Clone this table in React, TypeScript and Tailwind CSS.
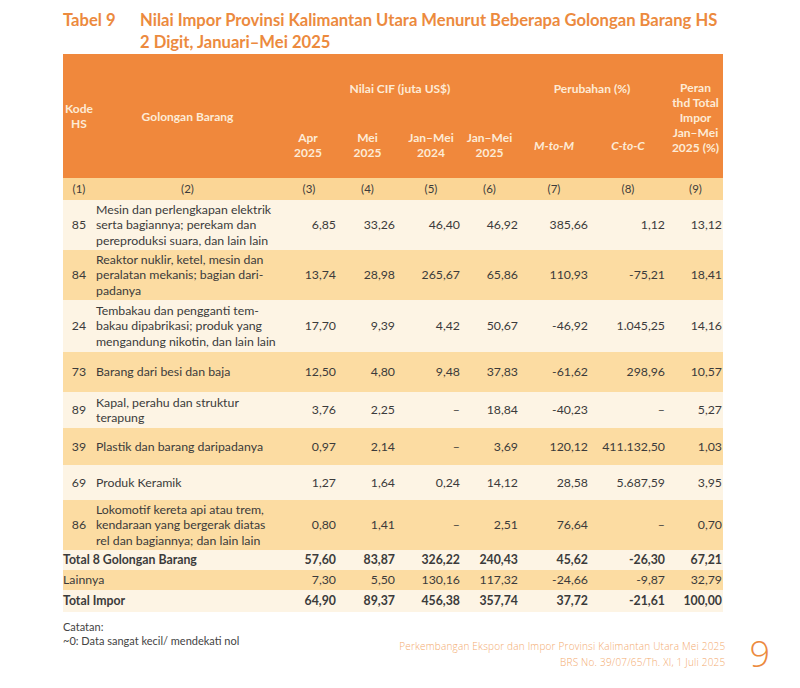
import React from 'react';

const COLS = 'grid grid-cols-[32px_185px_58px_59px_68px_55px_72px_76px_55px]';
const NUM_PAD = ['pr-[2px]', 'pr-[2px]', 'pr-[5px]', 'pr-[2px]', 'pr-[4px]', 'pr-[3px]', 'pr-[1px]'];

type Row = { kode: string; lines: string[]; vals: string[]; h: string; bg: string };

const CREAM = 'bg-[#fdf4e4]';
const YELLOW = 'bg-[#fcdca2]';

const rows: Row[] = [
  {
    kode: '85',
    lines: ['Mesin dan perlengkapan elektrik', 'serta bagiannya; perekam dan', 'pereproduksi suara, dan lain lain'],
    vals: ['6,85', '33,26', '46,40', '46,92', '385,66', '1,12', '13,12'],
    h: 'h-[50px]',
    bg: CREAM,
  },
  {
    kode: '84',
    lines: ['Reaktor nuklir, ketel, mesin dan', 'peralatan mekanis; bagian dari-', 'padanya'],
    vals: ['13,74', '28,98', '265,67', '65,86', '110,93', '-75,21', '18,41'],
    h: 'h-[50px]',
    bg: YELLOW,
  },
  {
    kode: '24',
    lines: ['Tembakau dan pengganti tem-', 'bakau dipabrikasi; produk yang', 'mengandung nikotin, dan lain lain'],
    vals: ['17,70', '9,39', '4,42', '50,67', '-46,92', '1.045,25', '14,16'],
    h: 'h-[52px]',
    bg: CREAM,
  },
  {
    kode: '73',
    lines: ['Barang dari besi dan baja'],
    vals: ['12,50', '4,80', '9,48', '37,83', '-61,62', '298,96', '10,57'],
    h: 'h-[40px]',
    bg: YELLOW,
  },
  {
    kode: '89',
    lines: ['Kapal, perahu dan struktur', 'terapung'],
    vals: ['3,76', '2,25', '–', '18,84', '-40,23', '–', '5,27'],
    h: 'h-[36px]',
    bg: CREAM,
  },
  {
    kode: '39',
    lines: ['Plastik dan barang daripadanya'],
    vals: ['0,97', '2,14', '–', '3,69', '120,12', '411.132,50', '1,03'],
    h: 'h-[37px]',
    bg: YELLOW,
  },
  {
    kode: '69',
    lines: ['Produk Keramik'],
    vals: ['1,27', '1,64', '0,24', '14,12', '28,58', '5.687,59', '3,95'],
    h: 'h-[35px]',
    bg: CREAM,
  },
  {
    kode: '86',
    lines: ['Lokomotif kereta api atau trem,', 'kendaraan yang bergerak diatas', 'rel dan bagiannya; dan lain lain'],
    vals: ['0,80', '1,41', '–', '2,51', '76,64', '–', '0,70'],
    h: 'h-[50px]',
    bg: YELLOW,
  },
];

const totals = [
  { label: 'Total 8 Golongan Barang', vals: ['57,60', '83,87', '326,22', '240,43', '45,62', '-26,30', '67,21'], bold: true, bg: CREAM, h: 'h-[20px]' },
  { label: 'Lainnya', vals: ['7,30', '5,50', '130,16', '117,32', '-24,66', '-9,87', '32,79'], bold: false, bg: YELLOW, h: 'h-[20px]' },
  { label: 'Total Impor', vals: ['64,90', '89,37', '456,38', '357,74', '37,72', '-21,61', '100,00'], bold: true, bg: CREAM, h: 'h-[22px]' },
];

const Header: React.FC = () => (
  <div className={`${COLS} grid-rows-[54px_70px] bg-[#f0883c] text-[12px] font-bold leading-[15px] text-[#fdebd6]`}>
    <div className="row-span-2 flex items-center justify-center text-center">
      Kode
      <br />
      HS
    </div>
    <div className="row-span-2 flex items-center justify-center">Golongan Barang</div>
    <div className="col-span-4 flex items-end justify-center pb-[12px]">Nilai CIF (juta US$)</div>
    <div className="col-span-2 flex items-end justify-center pb-[12px] pr-[4px]">Perubahan (%)</div>
    <div className="row-span-2 flex items-center justify-center pt-[2px] text-center">
      Peran
      <br />
      thd Total
      <br />
      Impor
      <br />
      Jan–Mei
      <br />
      2025 (%)
    </div>
    <div className="flex items-center justify-center pt-[4px] pr-[2px] text-center">
      Apr
      <br />
      2025
    </div>
    <div className="flex items-center justify-center pt-[4px] text-center">
      Mei
      <br />
      2025
    </div>
    <div className="flex items-center justify-center pt-[4px] text-center">
      Jan–Mei
      <br />
      2024
    </div>
    <div className="flex items-center justify-center pt-[4px] pr-[6px] text-center">
      Jan–Mei
      <br />
      2025
    </div>
    <div className="flex items-center justify-center pt-[4px] pr-[4px] italic">M-to-M</div>
    <div className="flex items-center justify-center pt-[4px] pr-[4px] italic">C-to-C</div>
  </div>
);

const App: React.FC = () => {
  return (
    <div className="h-[688px] w-[800px] bg-white font-['Lato','Noto_Sans',sans-serif] text-[#3b3b3b]">
      <div className="px-[63px] pt-[9px]">
        <div className="flex text-[16.6px] font-bold leading-[22px] text-[#ec8a3e]">
          <div className="w-[77px] shrink-0">Tabel 9</div>
          <div>
            Nilai Impor Provinsi Kalimantan Utara Menurut Beberapa Golongan Barang HS
            <br />
            2 Digit, Januari–Mei 2025
          </div>
        </div>

        <div className="mt-[1px] w-[660px]">
          <Header />

          <div className={`${COLS} h-[22px] items-center bg-[#fbd696] text-center text-[11.5px]`}>
            {['(1)', '(2)', '(3)', '(4)', '(5)', '(6)', '(7)', '(8)', '(9)'].map((n, i) => (
              <div key={n} className={i === 5 ? 'pr-[6px]' : i > 5 && i < 8 ? 'pr-[4px]' : ''}>
                {n}
              </div>
            ))}
          </div>

          {rows.map((r) => (
            <div key={r.kode} className={`${COLS} ${r.h} ${r.bg} items-center text-[12.3px] leading-[15.5px]`}>
              <div className="text-center">{r.kode}</div>
              <div className="pl-[1px]">
                {r.lines.map((l) => (
                  <div key={l}>{l}</div>
                ))}
              </div>
              {r.vals.map((v, i) => (
                <div key={i} className={`text-right ${NUM_PAD[i]}`}>
                  {v}
                </div>
              ))}
            </div>
          ))}

          {totals.map((t) => (
            <div
              key={t.label}
              className={`${COLS} ${t.h} ${t.bg} items-center text-[12.3px] ${t.bold ? 'font-bold' : ''}`}
            >
              <div className="col-span-2">{t.label}</div>
              {t.vals.map((v, i) => (
                <div key={i} className={`text-right ${NUM_PAD[i]}`}>
                  {v}
                </div>
              ))}
            </div>
          ))}
        </div>
      </div>

      <div className="flex items-start pl-[63px] pr-[30px]">
        <div className="mt-[8px] text-[11px] leading-[14px] text-[#444]">
          <div>Catatan:</div>
          <div>~0: Data sangat kecil/ mendekati nol</div>
        </div>
        <div className="ml-auto mt-[24px] flex items-center gap-[24px]">
          <div className="text-right font-['Open_Sans',sans-serif] text-[10px] font-light leading-[16px] tracking-[0.2px] text-[#f3ab6f]">
            <div>Perkembangan Ekspor dan Impor Provinsi Kalimantan Utara Mei 2025</div>
            <div>BRS No. 39/07/65/Th. XI, 1 Juli 2025</div>
          </div>
          <div className="font-['Open_Sans',sans-serif] text-[36px] font-light leading-[36px] text-[#ec8a3e]">9</div>
        </div>
      </div>
    </div>
  );
};

export default App;
